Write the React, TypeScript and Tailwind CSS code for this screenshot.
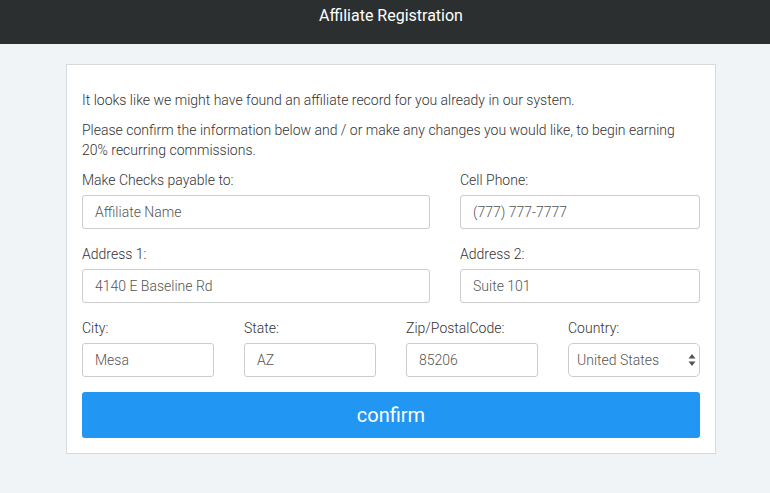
import React from "react";

const inputCls =
  "h-[34px] w-full rounded-[3px] border border-[#cccccc] bg-white px-3 text-[14px] font-light text-[#555555] outline-none";

function Field({ label, value }: { label: string; value: string }) {
  return (
    <div className="flex flex-col">
      <label className="mb-[5px] text-[14px] font-light leading-5 text-[#333333]">{label}</label>
      <input className={inputCls} defaultValue={value} />
    </div>
  );
}

export default function App() {
  return (
    <div className="min-h-[493px] bg-[#f1f4f7] font-['Roboto',sans-serif]">
      <header className="h-[44px] bg-[#2c2f2f]">
        <div className="ml-[66px] w-[650px] pt-[6px] text-center text-[16px] leading-5 text-white">
          Affiliate Registration
        </div>
      </header>

      <div className="ml-[66px] mt-[20px] w-[650px] border border-[#d6dadd] bg-white px-[15px] pt-[25px] pb-[15px]">
        <p className="text-[14px] font-light leading-5 text-[#333333]">
          It looks like we might have found an affiliate record for you already in our system.
        </p>
        <p className="mt-[10px] text-[14px] font-light leading-5 text-[#333333]">
          Please confirm the information below and / or make any changes you would like, to begin earning
          20% recurring commissions.
        </p>

        <div className="mt-[10px] grid grid-cols-[348px_240px] gap-x-[30px] gap-y-[15px]">
          <Field label="Make Checks payable to:" value="Affiliate Name" />
          <Field label="Cell Phone:" value="(777) 777-7777" />
          <Field label="Address 1:" value="4140 E Baseline Rd" />
          <Field label="Address 2:" value="Suite 101" />
        </div>

        <div className="mt-[15px] grid grid-cols-4 gap-x-[30px]">
          <Field label="City:" value="Mesa" />
          <Field label="State:" value="AZ" />
          <Field label="Zip/PostalCode:" value="85206" />
          <div className="flex flex-col">
            <label className="mb-[5px] text-[14px] font-light leading-5 text-[#333333]">Country:</label>
            <div className="relative">
              <select
                className="h-[34px] w-full appearance-none rounded-[5px] border border-[#cccccc] bg-white pl-2 pr-6 text-[14px] font-light text-[#555555] outline-none"
                defaultValue="US"
              >
                <option value="US">United States</option>
                <option value="CA">Canada</option>
              </select>
              <svg
                className="pointer-events-none absolute right-[4px] top-[10px]"
                width="8"
                height="14"
                viewBox="0 0 8 14"
              >
                <path d="M4 1 L7.5 5.5 H0.5 Z" fill="#555555" />
                <path d="M4 13 L7.5 8.5 H0.5 Z" fill="#555555" />
              </svg>
            </div>
          </div>
        </div>

        <button className="mt-[15px] h-[46px] w-full rounded-[3px] bg-[#2196f3] text-[20px] text-white">
          confirm
        </button>
      </div>
    </div>
  );
}
